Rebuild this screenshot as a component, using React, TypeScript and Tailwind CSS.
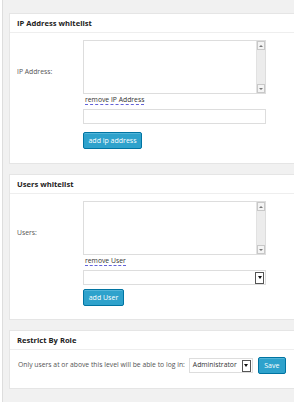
import React from "react";

function Scrollbar() {
  return (
    <div className="absolute right-0 top-0 bottom-0 flex w-[9px] flex-col justify-between bg-[#ececec] border-l border-[#e2e2e2]">
      <div className="flex h-[9px] items-center justify-center border border-[#c8c8c8] bg-[#f4f4f4]">
        <div className="h-0 w-0 border-x-[2px] border-b-[2px] border-x-transparent border-b-[#777]" />
      </div>
      <div className="flex h-[9px] items-center justify-center border border-[#c8c8c8] bg-[#f4f4f4]">
        <div className="h-0 w-0 border-x-[2px] border-t-[2px] border-x-transparent border-t-[#777]" />
      </div>
    </div>
  );
}

function ListBox() {
  return (
    <div className="relative h-[54px] w-[183px] border border-[#dddddd] bg-white">
      <Scrollbar />
    </div>
  );
}

function SelectArrow() {
  return (
    <div className="flex h-[12px] w-[9px] items-center justify-center border border-[#555] bg-white">
      <div className="h-0 w-0 border-x-[2px] border-t-[3px] border-x-transparent border-t-[#111]" />
    </div>
  );
}

function Button({ label, className = "" }: { label: string; className?: string }) {
  return (
    <button
      className={`flex h-[17px] items-center justify-center rounded-[2px] border border-[#0074a2] bg-[#2ea2cc] text-[7px] leading-none text-white shadow-[inset_0_1px_0_rgba(120,200,230,0.5)] ${className}`}
    >
      {label}
    </button>
  );
}

function Panel({ title, children, className = "" }: { title: string; children: React.ReactNode; className?: string }) {
  return (
    <div className={`w-[300px] border border-[#e5e5e5] bg-white ${className}`}>
      <div className="h-[19px] border-b border-[#eeeeee] pl-[7px] text-[7.6px] font-bold leading-[18px] text-[#222]">
        {title}
      </div>
      {children}
    </div>
  );
}

function RemoveLink({ label }: { label: string }) {
  return (
    <div className="ml-[2px] mt-[1px] w-fit border-b border-dashed border-[#6262d8] text-[6.8px] leading-[9px] text-[#333]">
      {label}
    </div>
  );
}

export default function App() {
  return (
    <div className="h-[402px] w-[294px] overflow-hidden bg-white pl-[2px] font-['Open_Sans',sans-serif]">
      <div className="h-full border-l border-[#dddddd] bg-[#f1f1f1] pl-[6px] pt-[13px]">
        {/* IP whitelist */}
        <Panel title="IP Address whitelist">
          <div className="pb-[14px] pl-[7px] pt-[7px]">
            <div className="grid grid-cols-[66px_1fr] items-center">
              <span className="text-[6.8px] text-[#555]">IP Address:</span>
              <div>
                <ListBox />
                <RemoveLink label="remove IP Address" />
              </div>
            </div>
            <div className="ml-[66px] mt-[4px] h-[15px] w-[183px] border border-[#dddddd] bg-white" />
            <Button label="add ip address" className="ml-[66px] mt-[8px] w-[59px]" />
          </div>
        </Panel>

        {/* Users whitelist */}
        <Panel title="Users whitelist" className="mt-[10px]">
          <div className="pb-[13px] pl-[7px] pt-[7px]">
            <div className="grid grid-cols-[66px_1fr] items-center">
              <span className="text-[6.8px] text-[#555]">Users:</span>
              <div>
                <ListBox />
                <RemoveLink label="remove User" />
              </div>
            </div>
            <div className="ml-[66px] mt-[4px] flex h-[15px] w-[183px] items-center justify-end border border-[#dddddd] bg-white pr-[1px]">
              <SelectArrow />
            </div>
            <Button label="add User" className="ml-[66px] mt-[4px] w-[41px]" />
          </div>
        </Panel>

        {/* Restrict by role */}
        <Panel title="Restrict By Role" className="mt-[10px]">
          <div className="flex items-center pb-[14px] pl-[8px] pt-[7px]">
            <span className="text-[6.8px] text-[#555]">Only users at or above this level will be able to log in:</span>
            <div className="ml-[4px] flex h-[15px] w-[64px] items-center justify-between border border-[#dddddd] bg-white pl-[3px] pr-[1px]">
              <span className="text-[6.8px] text-[#333]">Administrator</span>
              <SelectArrow />
            </div>
            <Button label="Save" className="ml-[5px] w-[28px]" />
          </div>
        </Panel>
      </div>
    </div>
  );
}
